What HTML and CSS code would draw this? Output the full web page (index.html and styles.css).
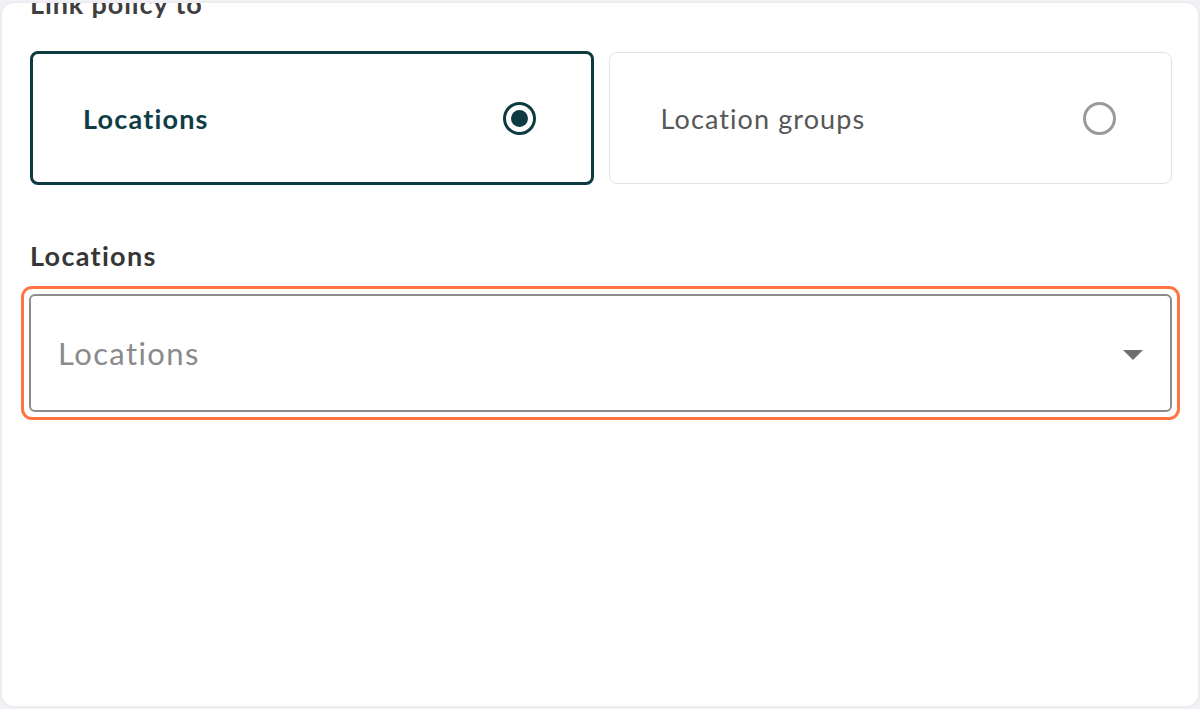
FILE: index.html
```html
<!DOCTYPE html>
<html lang="en">
<head>
<meta charset="utf-8">
<title>Link policy</title>
<link rel="stylesheet" href="styles.css">
</head>
<body>
<div class="card">
  <div class="content">
    <h2 class="section-title">Link policy to</h2>
    <div class="options">
      <label class="option option-selected">
        <span class="option-text">Locations</span>
        <span class="radio radio-on"><span class="radio-dot"></span></span>
      </label>
      <label class="option">
        <span class="option-text">Location groups</span>
        <span class="radio"></span>
      </label>
    </div>
    <div class="field-label">Locations</div>
    <div class="highlight">
      <div class="select">
        <span class="placeholder">Locations</span>
        <svg class="caret" width="20" height="10" viewBox="0 0 20 10"><path d="M0 0 L20 0 L10 10 Z" fill="#6f6f6f"/></svg>
      </div>
    </div>
  </div>
</div>
</body>
</html>
```
FILE: styles.css
```css
html, body {
  margin: 0;
  padding: 0;
}
body {
  background: #f2f2f6;
  font-family: "Lato", "Noto Sans", sans-serif;
  height: 709px;
  overflow: hidden;
}
.card {
  box-sizing: border-box;
  margin: 1px 0 0 0;
  height: 707px;
  background: #ffffff;
  border: 2px solid #ececf1;
  border-radius: 14px;
  overflow: hidden;
}
.content {
  padding: 0 26px 0 28px;
}
.section-title {
  margin: -15px 0 0 0;
  font-size: 27px;
  line-height: 32px;
  font-weight: 700;
  letter-spacing: 0.9px;
  color: #3f3f3f;
}
.options {
  display: grid;
  grid-template-columns: 1fr 1fr;
  gap: 15px;
  margin-top: 31px;
}
.option {
  box-sizing: border-box;
  display: flex;
  align-items: center;
  justify-content: space-between;
  height: 132px;
  margin: 1px 0;
  border: 1px solid #e3e3e3;
  border-radius: 8px;
  padding: 0 55px 0 51px;
}
.option-selected {
  height: 134px;
  margin: 0;
  border: 3px solid #0e3a42;
  padding: 0 55px 0 50px;
}
.option-text {
  font-size: 27px;
  letter-spacing: 1.1px;
  color: #575757;
}
.option-selected .option-text {
  font-weight: 700;
  letter-spacing: 1.2px;
  color: #0f3d46;
}
.radio {
  box-sizing: border-box;
  width: 33px;
  height: 33px;
  border-radius: 50%;
  border: 3px solid #9a9a9a;
  display: flex;
  align-items: center;
  justify-content: center;
}
.radio-on {
  border-color: #0e3a42;
}
.radio-dot {
  width: 17px;
  height: 17px;
  border-radius: 50%;
  background: #0e3a42;
}
.field-label {
  margin-top: 55px;
  font-size: 27px;
  line-height: 32px;
  font-weight: 700;
  letter-spacing: 1.3px;
  color: #363636;
}
.highlight {
  margin: 14px -8px 0 -9px;
  border: 3px solid #ff7441;
  border-radius: 11px;
  padding: 5px;
}
.select {
  box-sizing: border-box;
  height: 118px;
  border: 2px solid #8c8c8c;
  border-radius: 6px;
  display: flex;
  align-items: center;
  justify-content: space-between;
  padding: 0 27px 0 27px;
}
.placeholder {
  font-size: 31px;
  letter-spacing: 1.4px;
  color: #8a8a8a;
}
.caret {
  display: block;
  margin-top: 4px;
}
```
